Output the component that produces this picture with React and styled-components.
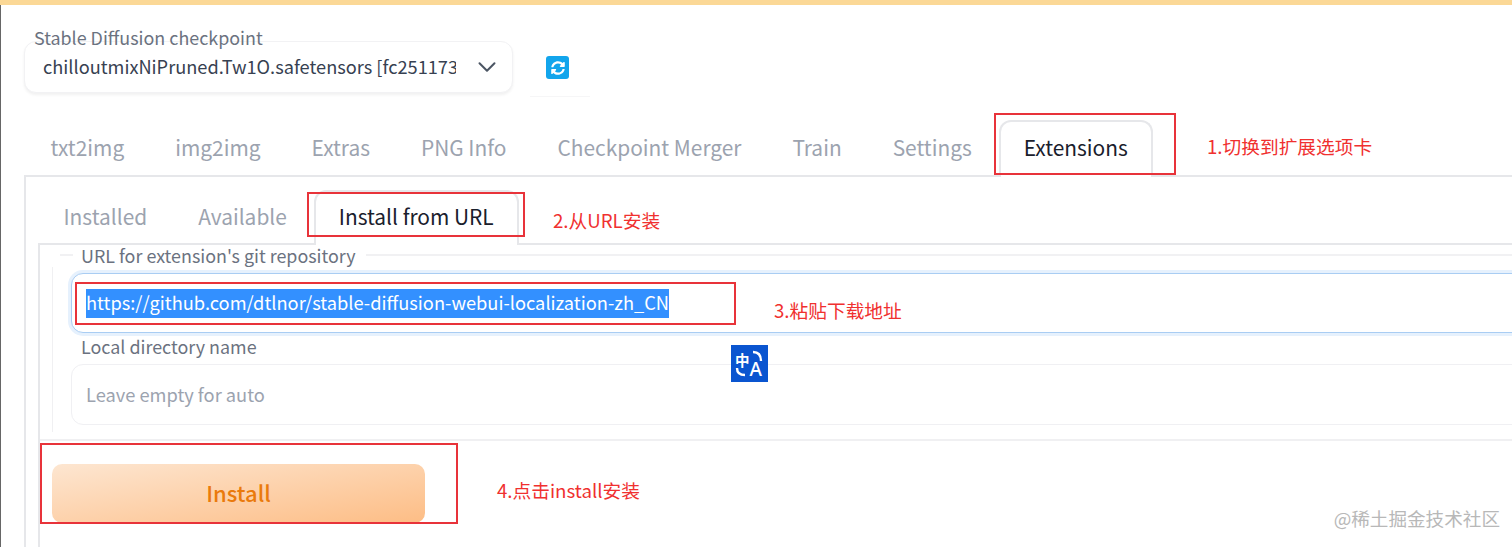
import React from "react";
import styled, { createGlobalStyle } from "styled-components";
import { FaSyncAlt } from "react-icons/fa";
import { ChevronDown } from "lucide-react";

const GlobalStyle = createGlobalStyle`
  html, body {
    margin: 0;
    padding: 0;
    background: #fff;
    overflow: hidden;
  }
  * { box-sizing: border-box; }
`;

const Page = styled.div`
  position: relative;
  width: 1512px;
  height: 547px;
  overflow: hidden;
  background: #fff;
  font-family: "Noto Sans CJK SC", "Noto Sans", sans-serif;
  color: #1f2937;
`;

const TopBar = styled.div`
  height: 5px;
  background: #fbd896;
`;

const Main = styled.div`
  border-left: 1px solid #666;
  height: 542px;
  padding-left: 23px;
`;

const CheckpointRow = styled.div`
  display: flex;
  align-items: flex-start;
  padding-top: 21px;
  height: 92px;
  margin-bottom: 23px;
`;

const CheckpointField = styled.div`
  width: 489px;
`;

const FieldLabel = styled.div`
  font-size: 17.9px;
  line-height: 24px;
  color: #6b7280;
  padding-left: 10px;
  margin: -1px 0 -8px;
`;

const Select = styled.div`
  display: flex;
  align-items: center;
  height: 52px;
  padding: 0 10px 0 18px;
  background: #fff;
  border: 1px solid #f2f2f4;
  border-radius: 12px;
  box-shadow: 0 2px 3px rgba(0, 0, 0, 0.06);
`;

const SelectValue = styled.div`
  width: 413px;
  padding-bottom: 2px;
  overflow: hidden;
  white-space: nowrap;
  font-size: 18.2px;
  color: #374151;
`;

const SelectArrow = styled(ChevronDown)`
  margin-left: auto;
  color: #4b5563;
`;

const RefreshCell = styled.div`
  display: flex;
  justify-content: flex-start;
  width: 60px;
  height: 71px;
  margin-left: 17px;
  padding: 30px 0 0 16px;
  border-bottom: 1px solid #f6f6f7;
`;

const RefreshButton = styled.div`
  display: flex;
  align-items: center;
  justify-content: center;
  width: 23px;
  height: 23px;
  border-radius: 3px;
  background: #12a5ec;
  color: #fff;
  font-size: 14px;
`;

const TabRow = styled.div`
  display: flex;
  align-items: stretch;
  height: ${(p) => p.$height}px;
  padding-left: ${(p) => p.$inset}px;
  padding-bottom: 2px;
  position: relative;
`;

const Tab = styled.div`
  display: flex;
  align-items: center;
  padding: 0 ${(p) => (p.$active ? 23 : 25.5)}px;
  font-size: 20.9px;
  white-space: nowrap;
  color: ${(p) => (p.$active ? "#1a202c" : "#9ca3af")};
  ${(p) =>
    p.$active &&
    `
    background: #fff;
    border: 2px solid #e6e7ea;
    border-bottom: none;
    border-radius: 12px 12px 0 0;
    margin: 0 0 -4px 1.5px;
    padding-bottom: 6px;
    position: relative;
    z-index: 1;
  `}
`;

const Panel = styled.div`
  margin-right: -40px;
  height: 375px;
  border-top: 2px solid #e6e7ea;
  border-left: 2px solid #e6e7ea;
  padding: 13px 0 0 12px;
`;

const SubPanel = styled.div`
  margin-right: -40px;
  height: 320px;
  border-top: 2px solid #e6e7ea;
  border-left: 2px solid #e6e7ea;
`;

const Legend = styled.div`
  display: flex;
  align-items: center;
  gap: 8px;
  height: 22px;
  padding-bottom: 2px;
  margin-left: 20px;
  font-size: 17.9px;
  color: #6b7280;
  white-space: nowrap;
  &::before {
    content: "";
    width: 13px;
    height: 2px;
    background: #f1f1f3;
  }
  &::after {
    content: "";
    flex: 1;
    height: 2px;
    margin-left: 2px;
    background: #f1f1f3;
  }
`;

const FieldBody = styled.div`
  margin-left: 12px;
  padding: 6px 0 7px 18px;
  border-left: 1px solid #f0f0f2;
`;

const TextBox = styled.div`
  display: flex;
  align-items: center;
  height: ${(p) => p.$height}px;
  padding-left: 14px;
  font-size: 18.25px;
  border-radius: 12px;
  background: #fff;
  border: 1px solid ${(p) => (p.$focused ? "#a9cdf3" : "#f0f0f3")};
  box-shadow: ${(p) => (p.$focused ? "0 0 0 3px #e6f1fd" : "none")};
`;

const Selected = styled.span`
  display: inline-block;
  line-height: 26px;
  padding-bottom: 3px;
  background: #3390ff;
  color: #fff;
  white-space: nowrap;
`;

const Placeholder = styled.span`
  color: #9ca3af;
  padding-bottom: 2px;
`;

const InnerLabel = styled.div`
  font-size: 17.9px;
  line-height: 24px;
  color: #6b7280;
  padding: 1px 0 6px 10px;
`;

const Divider = styled.div`
  height: 2px;
  margin-top: 7px;
  background: #f0f0f2;
`;

const InstallButton = styled.div`
  display: flex;
  align-items: center;
  justify-content: center;
  width: 373px;
  height: 59px;
  margin: 23px 0 0 12px;
  padding-bottom: 4px;
  border-radius: 10px;
  background: linear-gradient(to bottom right, #fde6d1, #fdbd85);
  color: #ea7a0c;
  font-size: 22px;
  font-weight: 500;
`;

const RedBox = styled.div`
  position: absolute;
  left: ${(p) => p.$x}px;
  top: ${(p) => p.$y}px;
  width: ${(p) => p.$w}px;
  height: ${(p) => p.$h}px;
  border: 2px solid #e8333a;
  z-index: 3;
`;

const Note = styled.div`
  position: absolute;
  left: ${(p) => p.$x}px;
  top: ${(p) => p.$y}px;
  font-size: 18.7px;
  line-height: 28px;
  color: #f0302f;
  white-space: nowrap;
  z-index: 3;
`;

const TranslateBadge = styled.svg`
  position: absolute;
  left: 731px;
  top: 345px;
  width: 37px;
  height: 37px;
  z-index: 3;
`;

const Watermark = styled.div`
  position: absolute;
  right: 12px;
  top: 506px;
  font-size: 18.6px;
  line-height: 24px;
  color: #b8b8b8;
  white-space: nowrap;
  z-index: 3;
`;

const mainTabs = ["txt2img", "img2img", "Extras", "PNG Info", "Checkpoint Merger", "Train", "Settings"];

export default function App() {
  return (
    <Page>
      <GlobalStyle />
      <TopBar />
      <Main>
        <CheckpointRow>
          <CheckpointField>
            <FieldLabel>Stable Diffusion checkpoint</FieldLabel>
            <Select>
              <SelectValue>chilloutmixNiPruned.Tw1O.safetensors [fc2511737a]</SelectValue>
              <SelectArrow size={30} strokeWidth={1.6} />
            </Select>
          </CheckpointField>
          <RefreshCell>
            <RefreshButton>
              <FaSyncAlt />
            </RefreshButton>
          </RefreshCell>
        </CheckpointRow>

        <TabRow $height={55} $inset={1}>
          {mainTabs.map((t) => (
            <Tab key={t}>{t}</Tab>
          ))}
          <Tab $active>Extensions</Tab>
        </TabRow>

        <Panel>
          <TabRow $height={53} $inset={0}>
            <Tab>Installed</Tab>
            <Tab>Available</Tab>
            <Tab $active>Install from URL</Tab>
          </TabRow>
          <SubPanel>
            <Legend>URL for extension's git repository</Legend>
            <FieldBody>
              <TextBox $height={60} $focused>
                <Selected>https://github.com/dtlnor/stable-diffusion-webui-localization-zh_CN</Selected>
              </TextBox>
              <InnerLabel>Local directory name</InnerLabel>
              <TextBox $height={61}>
                <Placeholder>Leave empty for auto</Placeholder>
              </TextBox>
            </FieldBody>
            <Divider />
            <InstallButton>Install</InstallButton>
          </SubPanel>
        </Panel>
      </Main>

      <RedBox $x={994} $y={113} $w={182} $h={62} />
      <RedBox $x={307} $y={192} $w={218} $h={45} />
      <RedBox $x={75} $y={282} $w={661} $h={43} />
      <RedBox $x={40} $y={443} $w={418} $h={81} />

      <Note $x={1207} $y={132}>1.切换到扩展选项卡</Note>
      <Note $x={553} $y={206}>2.从URL安装</Note>
      <Note $x={774} $y={296}>3.粘贴下载地址</Note>
      <Note $x={497} $y={476}>4.点击install安装</Note>

      <TranslateBadge viewBox="0 0 37 37">
        <rect width="37" height="37" fill="#0a55d0" />
        <text x="4" y="20.5" fontSize="14.5" fontWeight="700" fill="#fff" fontFamily="'Noto Sans CJK SC', sans-serif">
          中
        </text>
        <text x="18.5" y="31" fontSize="19" fontWeight="500" fill="#fff" fontFamily="'Noto Sans', sans-serif">
          A
        </text>
        <path d="M22 7q8 0 8 9" fill="none" stroke="#fff" strokeWidth="2.4" />
        <path d="M6 23q0 7 8 7" fill="none" stroke="#fff" strokeWidth="2.4" />
      </TranslateBadge>

      <Watermark>@稀土掘金技术社区</Watermark>
    </Page>
  );
}
